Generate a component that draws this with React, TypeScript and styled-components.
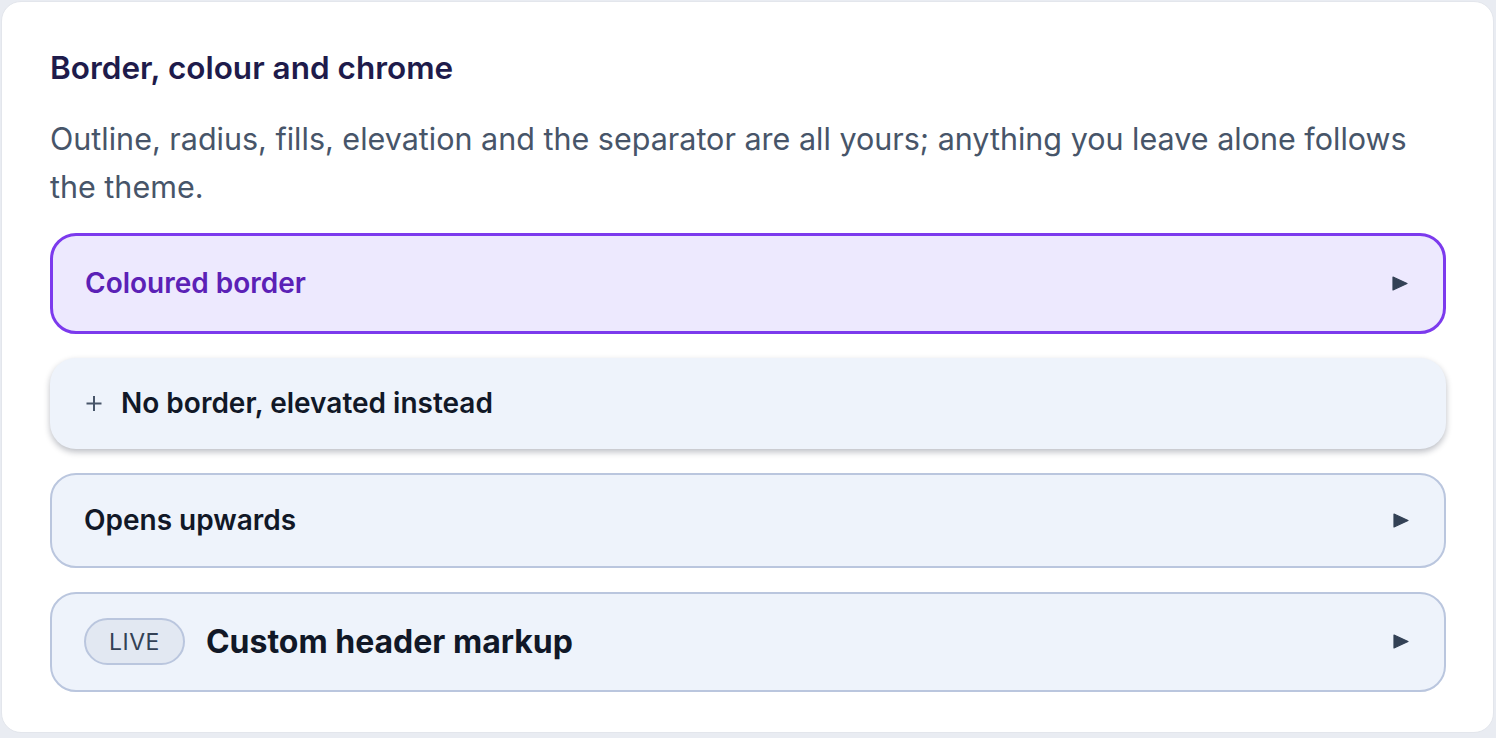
import styled, { createGlobalStyle } from 'styled-components'

const GlobalStyle = createGlobalStyle`
  html, body {
    margin: 0;
    padding: 0;
    background: #e9ecf2;
  }
  body {
    font-family: 'Inter', 'Noto Sans', sans-serif;
  }
`

type Variant = 'coloured' | 'elevated' | 'plain'

const Arrow = () => (
  <svg width="16" height="15" viewBox="0 0 16 15" aria-hidden="true">
    <polygon points="1,1 15,7.5 1,14" fill="#334155" stroke="#334155" strokeWidth="1.2" strokeLinejoin="round" />
  </svg>
)

const PlusIcon = () => (
  <svg width="16" height="17" viewBox="0 0 16 17" aria-hidden="true">
    <path d="M8 1v15M0.5 8.5h15" stroke="#475569" strokeWidth="2" fill="none" />
  </svg>
)

const App = () => {
  return (
    <>
      <GlobalStyle />
      <Card>
        <Title>Border, colour and chrome</Title>
        <Description>
          Outline, radius, fills, elevation and the separator are all yours; anything you leave alone follows the theme.
        </Description>

        <List>
          <Item variant="coloured">
            <Header variant="coloured">
              <Label variant="coloured">Coloured border</Label>
              <Arrow />
            </Header>
          </Item>

          <Item variant="elevated">
            <Header variant="elevated">
              <Plus><PlusIcon /></Plus>
              <Label>No border, elevated instead</Label>
            </Header>
          </Item>

          <Item variant="plain">
            <Header variant="plain">
              <Label>Opens upwards</Label>
              <Arrow />
            </Header>
          </Item>

          <Item variant="plain">
            <Header variant="plain" $tight>
              <Pill>LIVE</Pill>
              <BigLabel>Custom header markup</BigLabel>
              <Arrow />
            </Header>
          </Item>
        </List>
      </Card>
    </>
  )
}

const Card = styled.section`
  margin: 1px 2px 3px 1px;
  background: #ffffff;
  border: 1px solid #e3e6ec;
  border-radius: 20px;
  padding: 46px 47px 40px 48px;
  display: flex;
  flex-direction: column;
`

const Title = styled.h2`
  margin: 0;
  font-size: 31.5px;
  line-height: 40px;
  font-weight: 600;
  color: #1e1b4b;
`

const Description = styled.p`
  margin: 27px 0 0 0;
  font-size: 30.5px;
  line-height: 48px;
  color: #475569;
`

const List = styled.div`
  margin-top: 22px;
  display: flex;
  flex-direction: column;
  gap: 24px;
`

const Item = styled.div<{ variant: Variant }>`
  border-radius: 26px;
  background: ${p => (p.variant === 'coloured' ? '#ede9fe' : '#eef3fb')};
  border: ${p =>
    p.variant === 'coloured' ? '3px solid #7c3aed' : p.variant === 'plain' ? '2px solid #bac6de' : 'none'};
  box-shadow: ${p => (p.variant === 'elevated' ? '0 3px 6px rgba(15, 23, 42, 0.28)' : 'none')};
`

const Header = styled.div<{ variant: Variant; $tight?: boolean }>`
  display: flex;
  align-items: center;
  padding: ${p => (p.$tight ? '24px 35px 25px 32px' : p.variant === 'coloured' ? '26px 35px 26px 32px' : '24px 35px 24px 32px')};
  min-height: 43px;
`

const Label = styled.span<{ variant?: Variant }>`
  flex: 1;
  font-size: 28px;
  line-height: 43px;
  font-weight: 600;
  color: ${p => (p.variant === 'coloured' ? '#5b21b6' : '#111827')};
`

const BigLabel = styled.span`
  flex: 1;
  margin-left: 21px;
  font-size: 32px;
  line-height: 43px;
  font-weight: 700;
  color: #111827;
`

const Plus = styled.span`
  display: flex;
  align-items: center;
  margin: 0 19px 0 4px;
`

const Pill = styled.span`
  display: inline-flex;
  align-items: center;
  justify-content: center;
  height: 43px;
  padding: 0 23px;
  border-radius: 999px;
  border: 2px solid #bac6de;
  background: #e2e8f2;
  font-size: 23px;
  letter-spacing: 0.5px;
  color: #334155;
`

export default App
